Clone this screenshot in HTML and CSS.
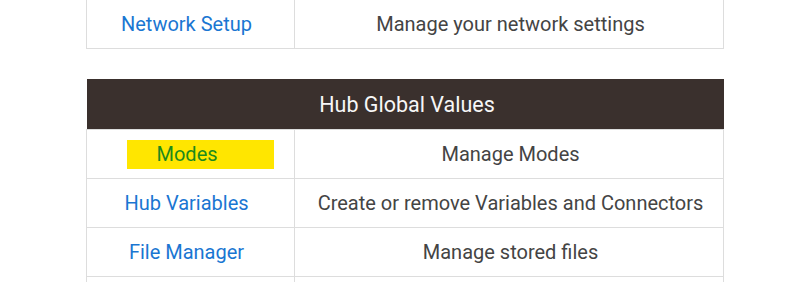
FILE: index.html
```html
<!DOCTYPE html>
<html lang="en">
<head>
  <meta charset="UTF-8" />
  <meta name="viewport" content="width=device-width, initial-scale=1.0" />
  <title>Hub Settings</title>
  <link rel="stylesheet" href="styles.css">
</head>
<body>
  <div class="page">
    <table class="menu-table menu-top">
      <colgroup>
        <col class="col-link">
        <col>
      </colgroup>
      <tr>
        <td class="menu-link"><a href="#">Network Setup</a></td>
        <td class="menu-desc">Manage your network settings</td>
      </tr>
    </table>

    <table class="menu-table">
      <colgroup>
        <col class="col-link">
        <col>
      </colgroup>
      <tr>
        <th class="menu-header" colspan="2">Hub Global Values</th>
      </tr>
      <tr>
        <td class="menu-link"><a href="#" class="menu-active">Modes</a></td>
        <td class="menu-desc">Manage Modes</td>
      </tr>
      <tr>
        <td class="menu-link"><a href="#">Hub Variables</a></td>
        <td class="menu-desc">Create or remove Variables and Connectors</td>
      </tr>
      <tr>
        <td class="menu-link"><a href="#">File Manager</a></td>
        <td class="menu-desc">Manage stored files</td>
      </tr>
      <tr>
        <td class="menu-link"></td>
        <td class="menu-desc"></td>
      </tr>
    </table>
  </div>
</body>
</html>
```

FILE: styles.css
```css
body {
  margin: 0;
  font-family: Roboto, "Liberation Sans", sans-serif;
  background: #fff;
  color: #444;
  overflow: hidden;
}
.page {
  width: 638px;
  margin: -1px 0 0 86px;
}
.menu-table {
  width: 100%;
  border-collapse: collapse;
  table-layout: fixed;
  font-size: 20px;
}
.col-link {
  width: 208px;
}
.menu-top {
  margin-bottom: 30px;
}
.menu-table td {
  border: 1px solid #ddd;
  height: 48px;
  padding: 0;
  text-align: center;
  vertical-align: middle;
}
.menu-table td.menu-link {
  padding-right: 8px;
}
.menu-table td.menu-desc {
  padding-left: 3px;
}
.menu-header {
  background: #3a302d;
  color: #f7f7f7;
  font-size: 21.5px;
  font-weight: normal;
  height: 50px;
  padding: 0 0 0 4px;
  text-align: center;
}
.menu-link a {
  color: #1a76d2;
  text-decoration: none;
}
.menu-link a.menu-active {
  display: inline-block;
  width: 117px;
  margin-left: 27px;
  padding-left: 30px;
  text-align: left;
  line-height: 29px;
  background: #ffe600;
  color: #1d8a1d;
}
.menu-desc {
  color: #444;
}
```
